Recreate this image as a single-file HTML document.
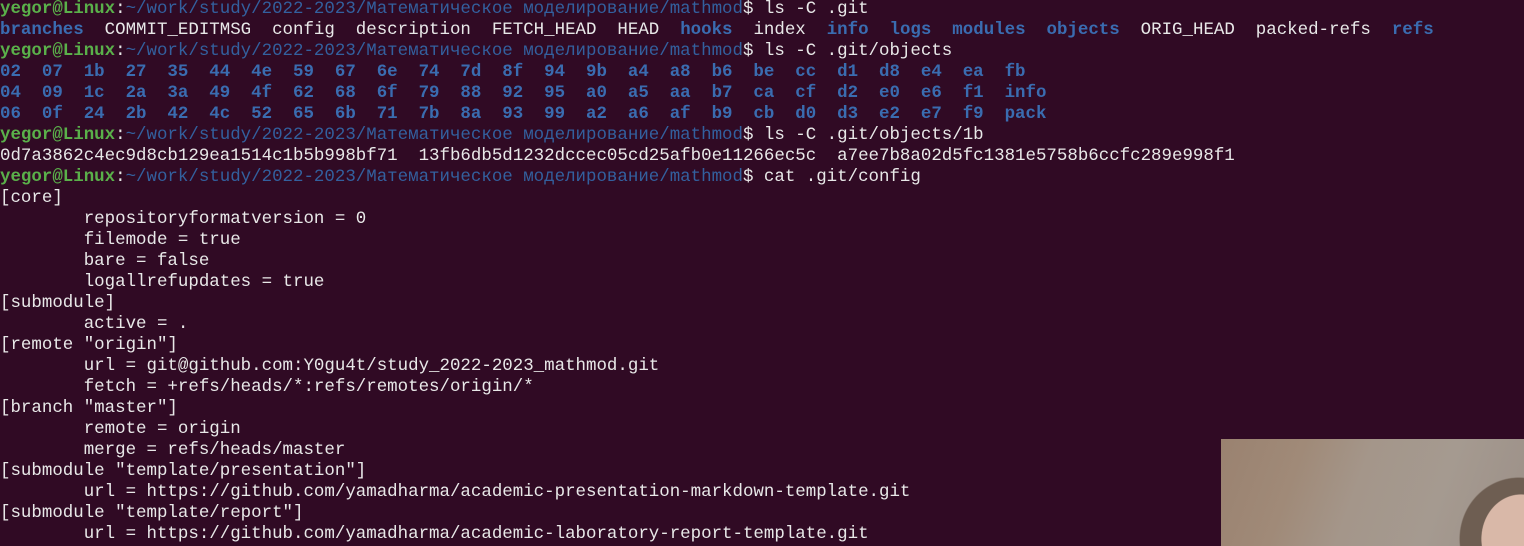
<!DOCTYPE html>
<html><head><meta charset="utf-8"><style>
html,body{margin:0;padding:0;background:#300a24;width:1524px;height:546px;overflow:hidden;position:relative}
pre{position:absolute;left:0;top:-1px;margin:0;font-family:"Liberation Mono","DejaVu Sans Mono",monospace;font-size:17.45px;line-height:21px;color:#e8e8e8;white-space:pre}
.g{color:#5ab04a;font-weight:bold}
.b{color:#33609e}
.bb{color:#3a6cb0;font-weight:bold}
.cam{position:absolute;left:1221px;top:439px;width:303px;height:107px;background:
radial-gradient(ellipse 40px 45px at 300px 100px,#d9b8a8 0,#d9b8a8 98%,transparent 100%),
radial-gradient(ellipse 60px 62px at 298px 100px,#6e5e52 0,#6e5e52 98%,transparent 100%),
linear-gradient(110deg,#9a8270 0%,#a08a78 25%,#a4968a 45%,#a59a90 70%,#9c9088 100%)}
</style></head><body>
<pre><span class="g">yegor@Linux</span>:<span class="b">~/work/study/2022-2023/Математическое моделирование/mathmod</span>$ ls -C .git
<span class="bb">branches</span>  COMMIT_EDITMSG  config  description  FETCH_HEAD  HEAD  <span class="bb">hooks</span>  index  <span class="bb">info</span>  <span class="bb">logs</span>  <span class="bb">modules</span>  <span class="bb">objects</span>  ORIG_HEAD  packed-refs  <span class="bb">refs</span>
<span class="g">yegor@Linux</span>:<span class="b">~/work/study/2022-2023/Математическое моделирование/mathmod</span>$ ls -C .git/objects
<span class="bb">02  07  1b  27  35  44  4e  59  67  6e  74  7d  8f  94  9b  a4  a8  b6  be  cc  d1  d8  e4  ea  fb</span>
<span class="bb">04  09  1c  2a  3a  49  4f  62  68  6f  79  88  92  95  a0  a5  aa  b7  ca  cf  d2  e0  e6  f1  info</span>
<span class="bb">06  0f  24  2b  42  4c  52  65  6b  71  7b  8a  93  99  a2  a6  af  b9  cb  d0  d3  e2  e7  f9  pack</span>
<span class="g">yegor@Linux</span>:<span class="b">~/work/study/2022-2023/Математическое моделирование/mathmod</span>$ ls -C .git/objects/1b
0d7a3862c4ec9d8cb129ea1514c1b5b998bf71  13fb6db5d1232dccec05cd25afb0e11266ec5c  a7ee7b8a02d5fc1381e5758b6ccfc289e998f1
<span class="g">yegor@Linux</span>:<span class="b">~/work/study/2022-2023/Математическое моделирование/mathmod</span>$ cat .git/config
[core]
        repositoryformatversion = 0
        filemode = true
        bare = false
        logallrefupdates = true
[submodule]
        active = .
[remote "origin"]
        url = git@github.com:Y0gu4t/study_2022-2023_mathmod.git
        fetch = +refs/heads/*:refs/remotes/origin/*
[branch "master"]
        remote = origin
        merge = refs/heads/master
[submodule "template/presentation"]
        url = https://github.com/yamadharma/academic-presentation-markdown-template.git
[submodule "template/report"]
        url = https://github.com/yamadharma/academic-laboratory-report-template.git</pre>
<div class="cam"></div>
</body></html>
